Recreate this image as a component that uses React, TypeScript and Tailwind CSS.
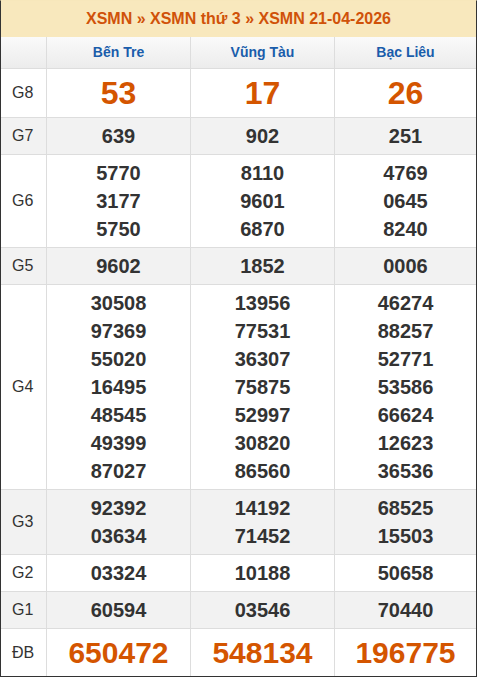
const provinces = ["Bến Tre", "Vũng Tàu", "Bạc Liêu"];

type Row = { label: string; values: string[][]; kind?: "big" | "db"; shaded?: boolean };

const rows: Row[] = [
  { label: "G8", values: [["53"], ["17"], ["26"]], kind: "big" },
  { label: "G7", values: [["639"], ["902"], ["251"]], shaded: true },
  {
    label: "G6",
    values: [
      ["5770", "3177", "5750"],
      ["8110", "9601", "6870"],
      ["4769", "0645", "8240"],
    ],
  },
  { label: "G5", values: [["9602"], ["1852"], ["0006"]], shaded: true },
  {
    label: "G4",
    values: [
      ["30508", "97369", "55020", "16495", "48545", "49399", "87027"],
      ["13956", "77531", "36307", "75875", "52997", "30820", "86560"],
      ["46274", "88257", "52771", "53586", "66624", "12623", "36536"],
    ],
  },
  { label: "G3", values: [["92392", "03634"], ["14192", "71452"], ["68525", "15503"]], shaded: true },
  { label: "G2", values: [["03324"], ["10188"], ["50658"]] },
  { label: "G1", values: [["60594"], ["03546"], ["70440"]], shaded: true },
  { label: "ĐB", values: [["650472"], ["548134"], ["196775"]], kind: "db" },
];

export default function App() {
  return (
    <div className="w-[477px] h-[677px] bg-white font-['Liberation_Sans',Arial,sans-serif]">
      <div className="border border-[#333] border-t-[#f7e7bb] h-[677px] overflow-hidden">
        <div className="h-[36px] bg-[#f8e8bd] flex items-center justify-center text-[16px] font-bold text-[#d05209]">
          XSMN » XSMN thứ 3 » XSMN 21-04-2026
        </div>

        <div className="grid grid-cols-[45px_144px_144px_1fr] h-[32px] bg-gradient-to-b from-[#fafafa] to-[#ececec] border-b border-[#ddd]">
          <div />
          {provinces.map((p) => (
            <div key={p} className="border-l border-[#ddd] flex items-center justify-center text-[14px] font-bold text-[#1a5dab]">
              {p}
            </div>
          ))}
        </div>

        {rows.map((row) => (
          <div
            key={row.label}
            className={`grid grid-cols-[45px_144px_144px_1fr] border-b border-[#ddd] ${row.shaded ? "bg-[#f2f2f2]" : "bg-white"}`}
          >
            <div className="flex items-center pl-[11px] text-[16px] font-normal text-[#333]">{row.label}</div>
            {row.values.map((vals, i) => (
              <div key={i} className="border-l border-[#ddd] flex flex-col items-center justify-center py-[4px]">
                {vals.map((v) =>
                  row.kind === "big" ? (
                    <span key={v} className="text-[32px] leading-[40px] font-bold text-[#d45500]">{v}</span>
                  ) : row.kind === "db" ? (
                    <span key={v} className="text-[30px] leading-[39px] font-bold text-[#d45500]">{v}</span>
                  ) : (
                    <span key={v} className="text-[20px] leading-[28px] font-bold text-[#333]">{v}</span>
                  )
                )}
              </div>
            ))}
          </div>
        ))}
      </div>
    </div>
  );
}
